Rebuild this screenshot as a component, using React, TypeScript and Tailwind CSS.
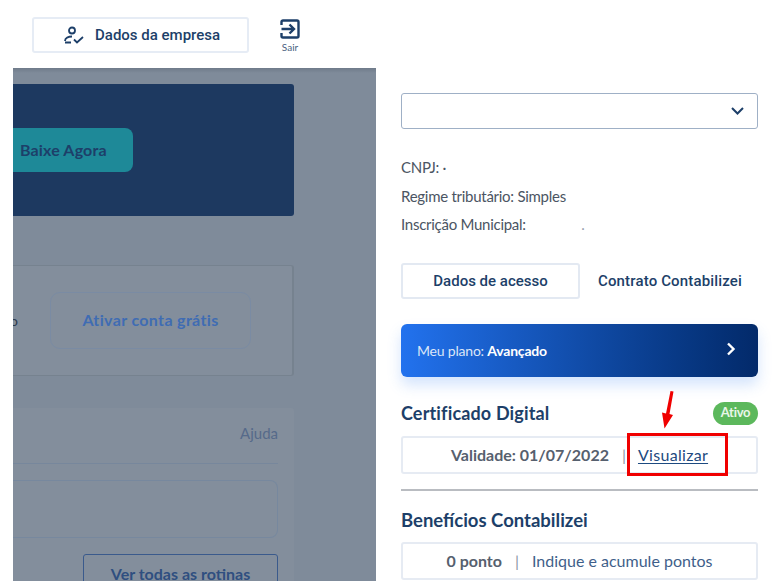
import React from "react";

const Divider = () => <div className="h-px bg-[#77879c]" />;

const LeftPanel = () => (
  <div className="relative ml-[13px] h-[513px] w-[363px] shrink-0 overflow-hidden bg-[#7f8b9a] pr-[82px] pt-4 font-['Lato',sans-serif]">
    <div className="absolute inset-x-0 top-0 h-[5px] bg-gradient-to-b from-[#6f7b8a] to-[#7f8b9a]" />
    {/* banner */}
    <div className="flex h-[132px] items-center rounded-r-[3px] bg-[#1d3960]">
      <div className="flex h-11 w-[120px] items-center rounded-r-lg bg-[#1e8998] pl-[7px] text-base font-bold tracking-[0.15px] text-[#1d3f69]">
        Baixe Agora
      </div>
    </div>

    {/* conta gratis */}
    <div className="mt-[49px] flex h-[111px] items-center rounded-r-[3px] border-y border-r-2 border-[#76828f] bg-[#838e9c]">
      <span className="mr-[32px] w-[5px] overflow-hidden text-sm text-[#2e3b4e]">
        <span className="-ml-[3px] block">o</span>
      </span>
      <div className="flex h-[57px] w-[201px] items-center justify-center rounded-[10px] border border-[#7a8ba3] pb-[2px] text-[16px] font-bold tracking-[0.35px] text-[#3f6cb3]">
        Ativar conta grátis
      </div>
    </div>

    {/* rotinas */}
    <div className="mt-8 h-[200px] rounded-tr-[3px] bg-[#838e9c] pr-4">
      <div className="flex h-[55px] items-center justify-end pb-[5px] text-[15px] text-[#566a8a]">Ajuda</div>
      <Divider />
      <div className="mt-4 h-[58px] rounded-r-lg border border-l-0 border-[#77889e]" />
      <div className="mt-[16px] flex justify-end">
        <div className="flex h-10 w-[195px] items-center justify-center rounded-[3px] border border-[#3a5a8c] text-base font-bold text-[#2f4f80]">
          Ver todas as rotinas
        </div>
      </div>
    </div>
  </div>
);

const RightPanel = () => (
  <div className="relative ml-[25px] w-[357px] shrink-0 pt-[25px] font-['Lato',sans-serif]">
    {/* seletor */}
    <div className="flex h-9 items-center justify-end rounded-[3px] border border-[#9fb0c6] bg-white pr-[13px]">
      <svg width="13" height="8" viewBox="0 0 13 8" fill="none" stroke="#1d3f69" strokeWidth="2">
        <path d="M1 1l5.500 5.500L12 1" />
      </svg>
    </div>

    <div className="mt-[28px] space-y-[7.500px] text-[15px] leading-[21px] tracking-[-0.27px] text-[#4b5563]">
      <p>CNPJ: ·</p>
      <p>Regime tributário: Simples</p>
      <p>
        Inscrição Municipal: <span className="ml-[52px] text-gray-400">.</span>
      </p>
    </div>

    <div className="mt-[28px] flex items-center">
      <div className="flex h-9 w-[179px] items-center justify-center rounded-[3px] border-2 border-[#e3e9f2] font-['Roboto',sans-serif] text-[15px] font-medium text-[#1d3f69]">
        Dados de acesso
      </div>
      <span className="ml-[18px] font-['Roboto',sans-serif] text-[15px] font-medium tracking-[0.15px] text-[#1d3f69]">
        Contrato Contabilizei
      </span>
    </div>

    <div className="mt-[25px] flex h-[53px] items-center justify-between rounded-md bg-gradient-to-r from-[#2272ee] to-[#032a6a] pl-4 pr-[22px] shadow-[0_8px_14px_rgba(60,130,240,0.22)]">
      <span className="text-sm tracking-[-0.2px] text-[#dbe6f7]">
        Meu plano: <b className="text-white">Avançado</b>
      </span>
      <svg className="-mt-[3px]" width="10" height="14" viewBox="0 0 10 14" fill="none" stroke="#fff" strokeWidth="2.400">
        <path d="M2 1.500L7.500 7 2 12.500" />
      </svg>
    </div>

    <div className="mt-[24px] flex items-center justify-between">
      <h2 className="text-[18px] font-bold leading-[24px] tracking-[0.15px] text-[#1d3f69]">Certificado Digital</h2>
      <span className="flex h-[23px] w-[45px] items-center justify-center rounded-full bg-[#5cb85c] text-[13px] font-bold tracking-[-0.3px] text-[#e9f6e9]">
        Ativo
      </span>
    </div>

    <div className="mt-[11px] flex h-[38px] items-center justify-center rounded-[3px] border-2 border-[#e6ebf3] text-base font-bold text-[#56606e]">
      <span>Validade: 01/07/2022</span>
      <span className="ml-[13px] font-normal text-[#8a94a3]">|</span>
      <span className="ml-[12px] font-normal tracking-[0.3px] text-[#1d4a80] underline underline-offset-2">Visualizar</span>
    </div>

    <div className="mt-[15px] h-0.5 bg-[#b9bcc1]" />

    <h2 className="mt-[17px] text-[18.500px] font-bold leading-[24px] text-[#1d3f69]">Benefícios Contabilizei</h2>

    <div className="mt-[10px] flex h-[38px] items-center justify-center rounded-[3px] border-2 border-[#e6ebf3] text-base text-[#56606e]">
      <span className="font-bold">0 ponto</span>
      <span className="ml-[13px] text-[#8a94a3]">|</span>
      <span className="ml-[13px] text-[#3f5f8a]">Indique e acumule pontos</span>
    </div>

    {/* marcação em vermelho */}
    <div className="absolute left-[226px] top-[365px] h-[43px] w-[101px] border-[3px] border-[#f00000]" />
    <svg className="absolute left-[259px] top-[322px]" width="16" height="40" viewBox="0 0 16 40" fill="#f00000">
      <path d="M10.500 1L13.500 1.500L9.500 24L13 25L4.500 38.500L2 22.500L6 23.500Z" />
    </svg>
  </div>
);

export default function App() {
  return (
    <div className="h-[587px] w-[779px] overflow-hidden bg-white">
      <div className="h-[581px] overflow-hidden">
        <header className="flex h-[68px] items-start pt-[17px] pl-[32px]">
          <div className="flex h-[36px] w-[217px] items-center rounded-[3px] border-2 border-[#e6ecf5] pl-[29px] font-['Roboto',sans-serif] text-[15px] font-medium text-[#1d3f69]">
            <svg width="22" height="20" viewBox="0 0 22 20" fill="none" stroke="#1d3f69" strokeWidth="1.800">
              <circle cx="9" cy="5.500" r="3" />
              <path d="M2 16c0-3 3.500-4.500 7-4.500M2 17.500h6M11 14.500l3 3 6-5.500" />
            </svg>
            <span className="ml-[10px]">Dados da empresa</span>
          </div>
          <div className="ml-[29px] mt-[2px] flex w-[24px] flex-col items-center">
            <svg width="20" height="20" viewBox="0 0 20 20" fill="none" stroke="#1d3f69" strokeWidth="2.400">
              <path d="M1.500 6V3a1.500 1.500 0 0 1 1.500-1.500h14A1.500 1.500 0 0 1 18.500 3v14a1.500 1.500 0 0 1-1.500 1.500H3A1.500 1.500 0 0 1 1.500 17v-3" />
              <path d="M1.500 10h11M9.500 5.500L14 10l-4.500 4.500" />
            </svg>
            <span className="mt-[3px] font-['Lato',sans-serif] text-[10px] leading-[10px] text-[#4a5f80]">Sair</span>
          </div>
        </header>
        <main className="flex">
          <LeftPanel />
          <RightPanel />
        </main>
      </div>
    </div>
  );
}
